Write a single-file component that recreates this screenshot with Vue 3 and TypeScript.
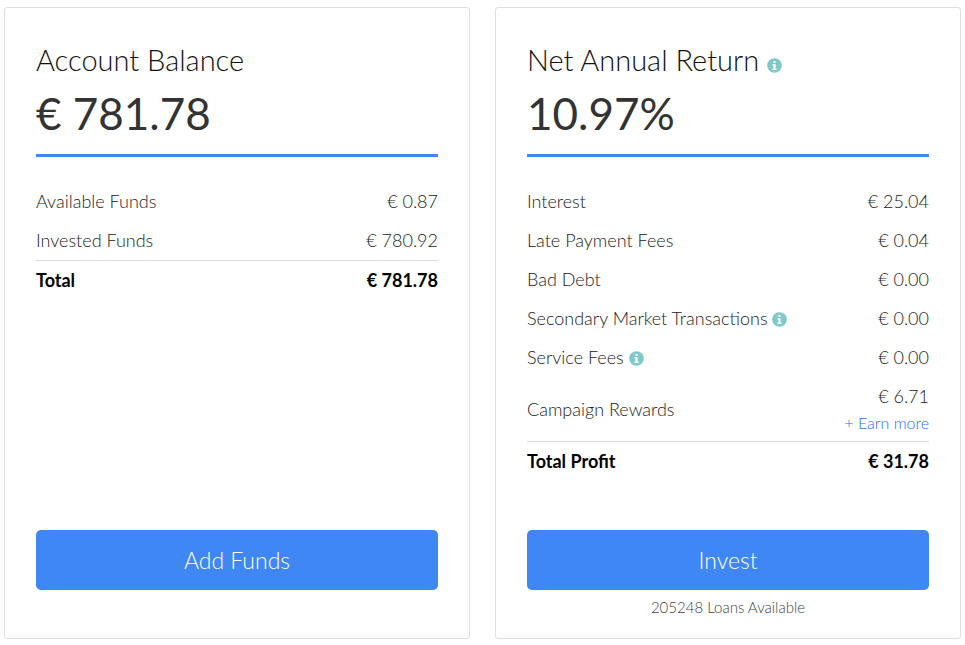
<script setup lang="ts">
interface Row {
  label: string
  value: string
  info?: boolean
  link?: string
}

interface Card {
  id: string
  title: string
  info?: boolean
  headline: string
  rows: Row[]
  total: Row
  action: string
  note?: string
}

const cards: Card[] = [
  {
    id: 'balance',
    title: 'Account Balance',
    headline: '€ 781.78',
    rows: [
      { label: 'Available Funds', value: '€ 0.87' },
      { label: 'Invested Funds', value: '€ 780.92' },
    ],
    total: { label: 'Total', value: '€ 781.78' },
    action: 'Add Funds',
  },
  {
    id: 'return',
    title: 'Net Annual Return',
    info: true,
    headline: '10.97%',
    rows: [
      { label: 'Interest', value: '€ 25.04' },
      { label: 'Late Payment Fees', value: '€ 0.04' },
      { label: 'Bad Debt', value: '€ 0.00' },
      { label: 'Secondary Market Transactions', value: '€ 0.00', info: true },
      { label: 'Service Fees', value: '€ 0.00', info: true },
      { label: 'Campaign Rewards', value: '€ 6.71', link: '+ Earn more' },
    ],
    total: { label: 'Total Profit', value: '€ 31.78' },
    action: 'Invest',
    note: '205248 Loans Available',
  },
]
</script>

<template>
  <main class="summary">
    <section v-for="card in cards" :key="card.id" class="card" :aria-labelledby="card.id">
      <header class="card-head">
        <h2 :id="card.id" class="title">
          {{ card.title }}
          <svg v-if="card.info" class="info" viewBox="0 0 15 15" aria-hidden="true">
            <circle cx="7.5" cy="7.5" r="7.3" />
            <path d="M6.4 3h2.2v1.9H6.4zM5.5 6h3.1v4.4h1V12H5.5v-1.6h1V7.5h-1z" />
          </svg>
        </h2>
        <p class="headline">{{ card.headline }}</p>
      </header>

      <table class="figures">
        <tbody>
          <tr v-for="row in card.rows" :key="row.label">
            <th scope="row">
              {{ row.label }}
              <svg v-if="row.info" class="info" viewBox="0 0 15 15" aria-hidden="true">
                <circle cx="7.5" cy="7.5" r="7.3" />
                <path d="M6.4 3h2.2v1.9H6.4zM5.5 6h3.1v4.4h1V12H5.5v-1.6h1V7.5h-1z" />
              </svg>
            </th>
            <td>
              {{ row.value }}
              <a v-if="row.link" href="#" class="more">{{ row.link }}</a>
            </td>
          </tr>
        </tbody>
        <tfoot>
          <tr>
            <th scope="row">{{ card.total.label }}</th>
            <td>{{ card.total.value }}</td>
          </tr>
        </tfoot>
      </table>

      <footer class="card-foot">
        <button type="button" class="action">{{ card.action }}</button>
        <p class="note">{{ card.note }}</p>
      </footer>
    </section>
  </main>
</template>

<style>
body {
  background: #fff;
}
</style>

<style scoped>
.summary {
  display: grid;
  grid-template-columns: 1fr 1fr;
  gap: 25px;
  padding: 7px 4px 6px;
  font-family: Lato, "Open Sans", sans-serif;
  font-weight: 300;
  color: #333;
}

.card {
  box-sizing: border-box;
  display: flex;
  flex-direction: column;
  padding: 32px 31px 16px;
  border: 1px solid #e0e0e0;
  border-radius: 3px;
}

.card-head {
  padding-bottom: 8px;
  border-bottom: 3px solid #3f87f5;
}

.title {
  margin: 0;
  font-size: 29px;
  font-weight: 300;
  line-height: 40px;
  color: #111;
}

.headline {
  margin: 0;
  font-size: 44px;
  font-weight: 400;
  line-height: 66px;
}

.info {
  width: 15px;
  height: 15px;
  vertical-align: -2px;
}

.info circle {
  fill: #7ccaca;
}

.info path {
  fill: #fff;
}

.figures {
  width: 100%;
  margin-top: 25px;
  border-collapse: collapse;
  font-size: 18px;
  line-height: 27px;
  color: #222;
}

.figures th,
.figures td {
  padding: 6px 0;
  font-weight: 300;
  text-align: left;
  vertical-align: middle;
}

.figures td {
  text-align: right;
}

.figures tfoot tr {
  border-top: 1px solid #ddd;
  color: #000;
}

.figures tfoot th,
.figures tfoot td {
  font-weight: 700;
}

.more {
  display: block;
  font-size: 16px;
  line-height: 25px;
  color: #1f6ff0;
  text-decoration: none;
}

.card-foot {
  margin-top: auto;
  padding-top: 49px;
}

.action {
  display: block;
  width: 100%;
  padding: 15px;
  border: 0;
  border-radius: 5px;
  background: #3f87f5;
  color: #fff;
  font: inherit;
  font-size: 23px;
  line-height: 30px;
  cursor: pointer;
}

.note {
  min-height: 26px;
  margin: 6px 0 0;
  font-size: 15px;
  line-height: 22px;
  color: #444;
  text-align: center;
}
</style>
